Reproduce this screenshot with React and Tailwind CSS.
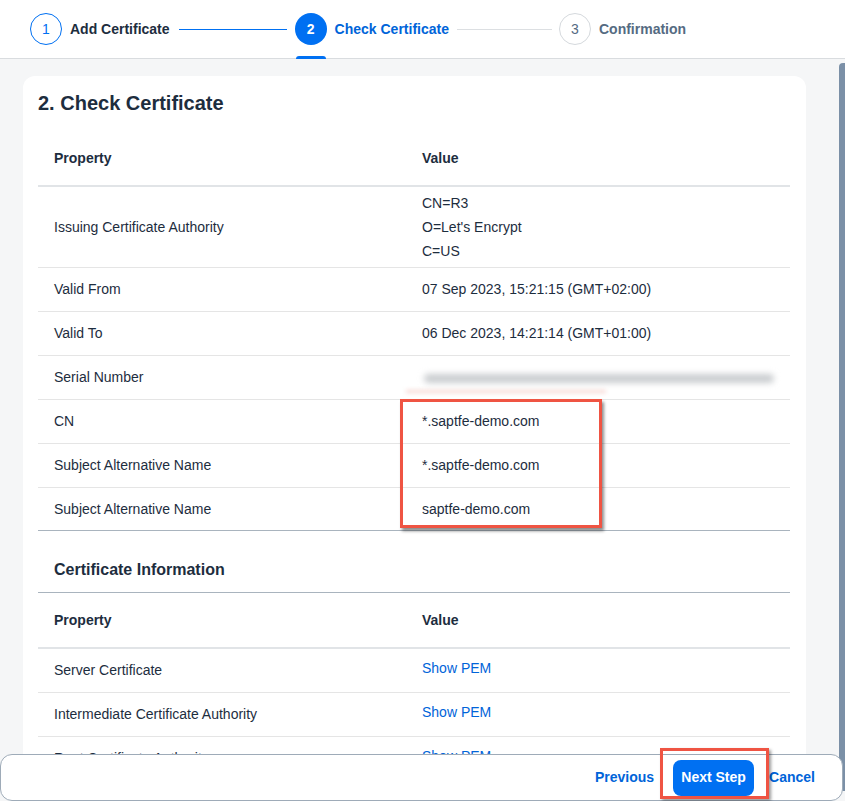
import React from "react";

const font = { fontFamily: '"Liberation Sans", Arial, sans-serif' };

function Row({ label, children, h = "h-[44px]", border = "border-[#e5e5e5]" }) {
  return (
    <div className={`grid grid-cols-[368px_1fr] ${h} border-b ${border} items-center text-[14px] text-[#1d2d3e]`}>
      <div className="pl-4">{label}</div>
      <div className="pl-4">{children}</div>
    </div>
  );
}

function Header() {
  return (
    <div className="grid grid-cols-[368px_1fr] h-[56px] border-b-2 border-[#e1e4e7] items-center text-[14px] font-bold text-[#1d2d3e]">
      <div className="pl-4">Property</div>
      <div className="pl-4">Value</div>
    </div>
  );
}

export default function App() {
  return (
    <div style={font} className="relative w-[845px] h-[801px] overflow-hidden bg-[#f5f6f7] flex flex-col">
      {/* Wizard header */}
      <div className="h-[59px] shrink-0 bg-white border-b border-[#d9dcdf] flex items-center pl-[30px]">
        <div className="w-8 h-8 rounded-full border border-[#0070f2] flex items-center justify-center text-[14px] text-[#0070f2]">1</div>
        <span className="ml-2 text-[14px] font-bold text-[#1d2d3e]">Add Certificate</span>
        <div className="ml-[9px] w-[108px] h-px bg-[#0070f2]" />
        <div className="ml-2 relative h-full flex items-center">
          <div className="w-8 h-8 rounded-full bg-[#0070f2] flex items-center justify-center text-[14px] font-bold text-white">2</div>
          <div className="absolute left-[1px] right-[1px] bottom-[-1px] h-[3px] rounded-t-sm bg-[#0070f2]" />
        </div>
        <span className="ml-2 text-[14px] font-bold text-[#0064d9]">Check Certificate</span>
        <div className="ml-[8px] w-[95px] h-px bg-[#dcdfe2]" />
        <div className="ml-[7px] w-8 h-8 rounded-full border border-[#d5d9dd] flex items-center justify-center text-[14px] text-[#556b82]">3</div>
        <span className="ml-2 text-[14px] font-bold text-[#556b82]">Confirmation</span>
      </div>

      {/* Content */}
      <div className="flex-1 flex min-h-0">
        <div className="pl-[23px] pt-[17px] min-h-0">
          <div className="w-[783px] bg-white rounded-xl pl-[15px] pr-4 pt-[15px] pb-6">
            <h1 className="text-[20px] leading-[24px] font-bold text-[#1d2d3e]">2. Check Certificate</h1>
            <div className="mt-4">
              <Header />
              <Row label="Issuing Certificate Authority" h="h-[81px]">
                <div className="leading-[24px]">
                  <div>CN=R3</div>
                  <div>O=Let's Encrypt</div>
                  <div>C=US</div>
                </div>
              </Row>
              <Row label="Valid From">07 Sep 2023, 15:21:15 (GMT+02:00)</Row>
              <Row label="Valid To">06 Dec 2023, 14:21:14 (GMT+01:00)</Row>
              <Row label="Serial Number">
                <div className="relative h-[20px]">
                  <div className="absolute left-[2px] top-[6px] w-[350px] h-[9px] rounded-full bg-[#c9cccf] blur-[3px]" />
                  <div className="absolute left-[-16px] top-[22px] w-[200px] h-[3px] bg-[#f6d6d2] blur-[2px]" />
                </div>
              </Row>
              <div className="relative">
                <Row label="CN">*.saptfe-demo.com</Row>
                <Row label="Subject Alternative Name">*.saptfe-demo.com</Row>
                <Row label="Subject Alternative Name" h="h-[43px]" border="border-[#a9b4be]">saptfe-demo.com</Row>
                <div className="absolute left-[362px] top-[-1px] w-[202px] h-[129px] border-[3px] border-[#ef5443] shadow-[2px_3px_3px_rgba(0,0,0,0.45)]" />
              </div>
              <div className="h-[62px] border-b border-[#a9b4be] pl-4 pt-[29px] text-[16px] leading-[20px] font-bold text-[#1d2d3e]">
                Certificate Information
              </div>
              <Header />
              <Row label="Server Certificate">
                <span className="text-[#0064d9] relative top-[-2px]">Show PEM</span>
              </Row>
              <Row label="Intermediate Certificate Authority">
                <span className="text-[#0064d9] relative top-[-2px]">Show PEM</span>
              </Row>
              <Row label="Root Certificate Authority">
                <span className="text-[#0064d9] relative top-[-2px]">Show PEM</span>
              </Row>
            </div>
          </div>
        </div>
        <div className="flex-1" />
        <div className="w-[6px] mt-[4px] mb-[10px] rounded-l-sm bg-[#7b90a7]" />
      </div>

      {/* Footer */}
      <div className="absolute left-0 bottom-0 w-[843px] h-[47px] bg-white border border-[#9eabb8] rounded-xl flex items-center justify-end pr-[27px] text-[14px] font-bold">
        <span className="text-[#0064d9]">Previous</span>
        <span className="ml-[19px] w-[81px] h-9 rounded-lg bg-[#0070f2] text-white flex items-center justify-center">Next Step</span>
        <span className="ml-[15px] text-[#0064d9]">Cancel</span>
      </div>
      <div className="absolute left-[660px] top-[748px] w-[109px] h-[51px] border-[3px] border-[#ef5443] shadow-[2px_2px_3px_rgba(0,0,0,0.4)]" />
    </div>
  );
}
